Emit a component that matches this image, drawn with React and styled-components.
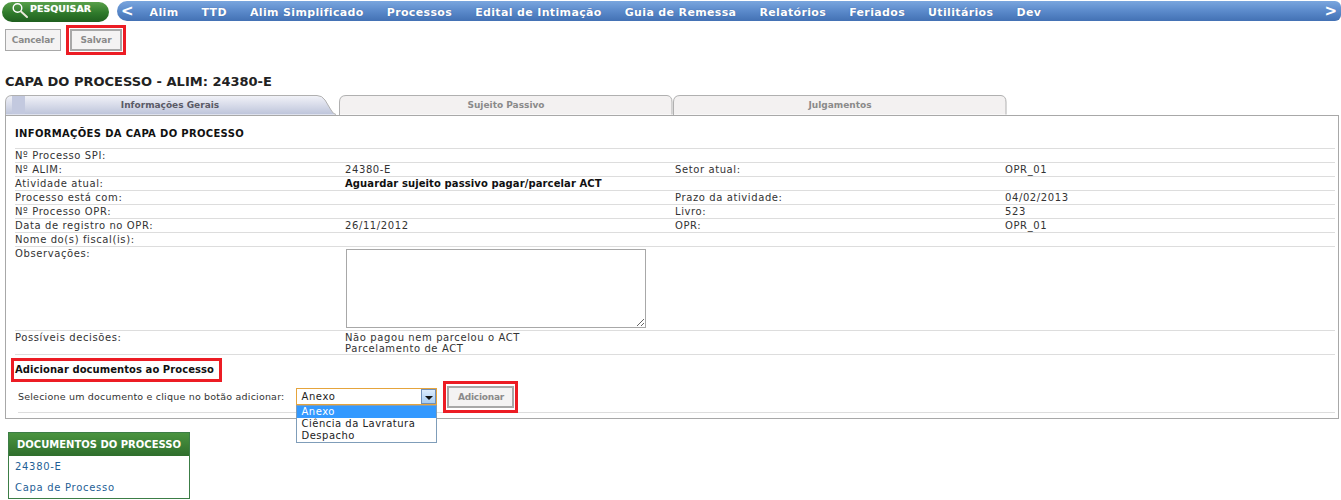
import styled, { createGlobalStyle } from "styled-components";

const GlobalStyle = createGlobalStyle`
  html, body {
    margin: 0;
    padding: 0;
    background: #fff;
    font-family: "DejaVu Sans", Verdana, sans-serif;
    font-size: 11px;
    color: #222;
  }
`;

const Page = styled.div`
  width: 1341px;
  height: 500px;
  overflow: hidden;
`;

const TopBar = styled.div`
  display: flex;
  align-items: flex-start;
  height: 25px;
  padding: 1px 0 0 2px;
  box-sizing: border-box;
`;

const SearchButton = styled.div`
  width: 107px;
  height: 20px;
  margin-top: 1px;
  display: flex;
  align-items: flex-start;
  box-sizing: border-box;
  padding: 0 0 0 9px;
  border-radius: 10px;
  background: linear-gradient(#58a04a, #2f7a2b 55%, #1f5f1f);
  color: #fff;
  font-weight: bold;
  font-size: 9.5px;
  line-height: 14px;
  white-space: nowrap;
  text-shadow: 0 0 1px rgba(255, 255, 255, 0.5);
  svg { flex: none; }
`;

const Nav = styled.div`
  margin-left: 8px;
  width: 1224px;
  height: 20px;
  display: flex;
  align-items: center;
  justify-content: space-between;
  border-radius: 10px 6px 6px 10px;
  background: linear-gradient(#7aa6de, #5b8acb 50%, #4371b4);
  color: #fff;
  font-weight: bold;
  box-sizing: border-box;
  padding: 0 4px 0 4px;
`;

const Arrow = styled.span`
  font-size: 15px;
  line-height: 20px;
  font-weight: bold;
`;

const NavItems = styled.div`
  display: flex;
  gap: 23px;
  white-space: nowrap;
  margin-left: 16px;
  margin-right: auto;
  padding-top: 2px;
  font-size: 11px;
  letter-spacing: 0.35px;
  text-shadow: 0 0 1px rgba(30, 60, 120, 0.6);
`;

const Actions = styled.div`
  display: flex;
  align-items: center;
  height: 30px;
  padding-left: 5px;
  gap: 5px;
`;

const Highlight = styled.div`
  border: 3px solid #ec1c24;
  padding: ${(props) => props.$pad || "1px"};
  display: flex;
`;

const GrayButton = styled.div`
  height: 22px;
  width: ${(props) => props.$width}px;
  box-sizing: border-box;
  border: 1px solid #a8a8a8;
  outline: ${(props) => (props.$thick ? "1px solid #a8a8a8" : "none")};
  outline-offset: -2px;
  background: #f4f3f3;
  color: #8a8a8a;
  font-size: 9px;
  letter-spacing: -0.2px;
  font-weight: bold;
  display: flex;
  align-items: center;
  justify-content: center;
`;

const Title = styled.h1`
  margin: 0;
  padding: 17px 0 0 5px;
  font-size: 13px;
  line-height: 20px;
  font-weight: bold;
  color: #222;
`;

const Tabs = styled.div`
  display: flex;
  height: 20px;
  margin-top: 3px;
  padding-left: 5px;
`;

const Tab = styled.div`
  position: relative;
  width: ${(props) => props.$width}px;
  margin-right: ${(props) => props.$gap || 0}px;
  height: 20px;
  display: flex;
  align-items: center;
  justify-content: center;
  font-size: 9px;
  font-weight: bold;
  color: ${(props) => (props.$active ? "#5a5a66" : "#8a8a8a")};
  span { position: relative; }
  svg { position: absolute; left: 0; top: 0; }
`;

const Panel = styled.div`
  width: 1334px;
  height: 304px;
  margin-left: 5px;
  box-sizing: border-box;
  border: 1px solid #a8a8a8;
  padding: 0 0 0 9px;
`;

const SectionTitle = styled.div`
  height: 32px;
  padding-top: 11px;
  box-sizing: border-box;
  font-size: 10px;
  font-weight: bold;
  line-height: 13px;
  color: #111;
  letter-spacing: 0.33px;
`;

const Rows = styled.div`
  width: 1320px;
  border-top: 1px solid #ddd;
`;

const Row = styled.div`
  display: grid;
  grid-template-columns: 330px 330px 330px 1fr;
  min-height: 13px;
  border-bottom: 1px solid #ddd;
  font-size: 10px;
  line-height: 13px;
  color: #333;
  letter-spacing: 0.6px;
`;

const Strong = styled.div`
  font-weight: bold;
  color: #111;
  letter-spacing: 0.1px;
  white-space: nowrap;
`;

const Notes = styled.textarea`
  display: block;
  width: 300px;
  height: 79px;
  margin: 2px 0 2px 1px;
  padding: 0;
  box-sizing: border-box;
  border: 1px solid #a8a8a8;
  background: #fff;
  outline: none;
`;

const DecisionCell = styled.div`
  padding-top: 1px;
  line-height: 11px;
`;

const AddHeading = styled.div`
  width: 204px;
  height: 18px;
  margin: 3px 0 0 -4px;
  padding-left: 1px;
  border: 3px solid #ec1c24;
  font-size: 10px;
  font-weight: bold;
  line-height: 17px;
  color: #111;
  white-space: nowrap;
  letter-spacing: 0.06px;
`;

const AddRow = styled.div`
  display: flex;
  align-items: center;
  box-sizing: border-box;
  height: 30px;
  margin-top: 1px;
  margin-left: 3px;
  padding-bottom: 2px;
  width: 1317px;
  border-bottom: 1px solid #ddd;
  font-size: 9.5px;
  color: #333;
  letter-spacing: 0.2px;
  white-space: nowrap;
`;

const SelectWrap = styled.div`
  position: relative;
  width: 141px;
  height: 17px;
  margin-left: 12px;
  margin-right: 6px;
`;

const SelectBox = styled.div`
  height: 17px;
  box-sizing: border-box;
  border: 1px solid #e5a43c;
  padding-left: 4px;
  background: #fff;
  color: #222;
  font-size: 10px;
  line-height: 15px;
  letter-spacing: 0.6px;
`;

const SelectArrow = styled.div`
  position: absolute;
  right: 1px;
  top: 1px;
  width: 15px;
  height: 15px;
  box-sizing: border-box;
  border: 1px solid #6f8fb8;
  background: linear-gradient(#dcebfb, #a8cdf3);
  &::after {
    content: "";
    position: absolute;
    left: 3px;
    top: 6px;
    border-left: 4px solid transparent;
    border-right: 4px solid transparent;
    border-top: 4px solid #111;
  }
`;

const Dropdown = styled.div`
  position: absolute;
  left: 0;
  top: 17px;
  width: 141px;
  box-sizing: border-box;
  border: 1px solid #7f9db9;
  background: #fff;
  z-index: 2;
`;

const Option = styled.div`
  height: 12px;
  line-height: 12px;
  padding-left: 4px;
  font-size: 10px;
  letter-spacing: 0.5px;
  color: ${(props) => (props.$selected ? "#fff" : "#222")};
  background: ${(props) => (props.$selected ? "#3399ff" : "#fff")};
`;

const DocsBox = styled.div`
  width: 182px;
  height: 67px;
  margin: 13px 0 0 8px;
  box-sizing: border-box;
  border: 1px solid #3c7d46;
`;

const DocsHeader = styled.div`
  height: 23px;
  background: linear-gradient(#4a9440, #2f6e2c);
  color: #fff;
  font-size: 10px;
  font-weight: bold;
  line-height: 23px;
  text-align: center;
  white-space: nowrap;
`;

const DocLink = styled.a`
  display: block;
  height: 21px;
  padding-left: 6px;
  font-size: 10px;
  line-height: 21px;
  color: #1f5f96;
  letter-spacing: 0.7px;
`;

const MagnifierIcon = () => (
  <svg width="19" height="18" viewBox="0 0 19 18" fill="none">
    <circle cx="6.5" cy="6" r="4.3" stroke="#fff" strokeWidth="1.4" />
    <path d="M10 9.5 L16 15" stroke="#e8e8d8" strokeWidth="2" strokeLinecap="round" />
  </svg>
);

const TabShape = ({ width, active }) => {
  const right = active
    ? `L${width - 18} .5 Q${width - 13} .5 ${width - 10} 5 L${width - 4} 15 Q${width - 2} 19 ${width + 1} 19.5`
    : `L${width - 6} .5 Q${width - 1} 1 ${width - 1} 7 L${width - 1} 19.5`;
  const fill = active ? "url(#activeTab)" : "#f3f1f1";
  return (
    <svg width={width + 2} height="20" viewBox={`0 0 ${width + 2} 20`}>
      <defs>
        <linearGradient id="activeTab" x1="0" y1="0" x2="0" y2="1">
          <stop offset="0" stopColor="#f2f3f8" />
          <stop offset="1" stopColor="#bcc3da" />
        </linearGradient>
      </defs>
      <path d={`M.5 20 L.5 7 Q.5 .5 7 .5 ${right} L.5 19.5 Z`} fill={fill} />
      {active && <rect x="7" y="1" width="13" height="18" fill="#c3c9df" />}
      <path
        d={`M.5 20 L.5 7 Q.5 .5 7 .5 ${right}`}
        fill="none"
        stroke="#b0b0b0"
      />
    </svg>
  );
};

const navItems = [
  "Alim",
  "TTD",
  "Alim Simplificado",
  "Processos",
  "Edital de Intimação",
  "Guia de Remessa",
  "Relatórios",
  "Feriados",
  "Utilitários",
  "Dev",
];

const rows = [
  ["Nº Processo SPI:", "", "", ""],
  ["Nº ALIM:", "24380-E", "Setor atual:", "OPR_01"],
  ["Atividade atual:", <Strong key="a">Aguardar sujeito passivo pagar/parcelar ACT</Strong>, "", ""],
  ["Processo está com:", "", "Prazo da atividade:", "04/02/2013"],
  ["Nº Processo OPR:", "", "Livro:", "523"],
  ["Data de registro no OPR:", "26/11/2012", "OPR:", "OPR_01"],
  ["Nome do(s) fiscal(is):", "", "", ""],
];

export default function App() {
  return (
    <Page>
      <GlobalStyle />
      <TopBar>
        <SearchButton>
          <MagnifierIcon />
          PESQUISAR
        </SearchButton>
        <Nav>
          <Arrow>&lt;</Arrow>
          <NavItems>
            {navItems.map((item) => (
              <span key={item}>{item}</span>
            ))}
          </NavItems>
          <Arrow>&gt;</Arrow>
        </Nav>
      </TopBar>

      <Actions>
        <GrayButton $width={56}>Cancelar</GrayButton>
        <Highlight>
          <GrayButton $width={52} $thick>Salvar</GrayButton>
        </Highlight>
      </Actions>

      <Title>CAPA DO PROCESSO - ALIM: 24380-E</Title>

      <Tabs>
        <Tab $width={330} $gap={4} $active>
          <TabShape width={330} active />
          <span>Informações Gerais</span>
        </Tab>
        <Tab $width={334}>
          <TabShape width={334} />
          <span>Sujeito Passivo</span>
        </Tab>
        <Tab $width={334}>
          <TabShape width={334} />
          <span>Julgamentos</span>
        </Tab>
      </Tabs>

      <Panel>
        <SectionTitle>INFORMAÇÕES DA CAPA DO PROCESSO</SectionTitle>
        <Rows>
          {rows.map((row) => (
            <Row key={row[0]}>
              {row.map((cell, i) => (
                <div key={i}>{cell}</div>
              ))}
            </Row>
          ))}
          <Row>
            <div>Observações:</div>
            <Notes />
          </Row>
          <Row>
            <div>Possíveis decisões:</div>
            <DecisionCell>
              Não pagou nem parcelou o ACT
              <br />
              Parcelamento de ACT
            </DecisionCell>
          </Row>
        </Rows>
        <AddHeading>Adicionar documentos ao Processo</AddHeading>
        <AddRow>
          Selecione um documento e clique no botão adicionar:
          <SelectWrap>
            <SelectBox>Anexo</SelectBox>
            <SelectArrow />
            <Dropdown>
              <Option $selected>Anexo</Option>
              <Option>Ciência da Lavratura</Option>
              <Option>Despacho</Option>
            </Dropdown>
          </SelectWrap>
          <Highlight $pad="2px 1px">
            <GrayButton $width={67} $thick>Adicionar</GrayButton>
          </Highlight>
        </AddRow>
      </Panel>

      <DocsBox>
        <DocsHeader>DOCUMENTOS DO PROCESSO</DocsHeader>
        <DocLink>24380-E</DocLink>
        <DocLink>Capa de Processo</DocLink>
      </DocsBox>
    </Page>
  );
}
